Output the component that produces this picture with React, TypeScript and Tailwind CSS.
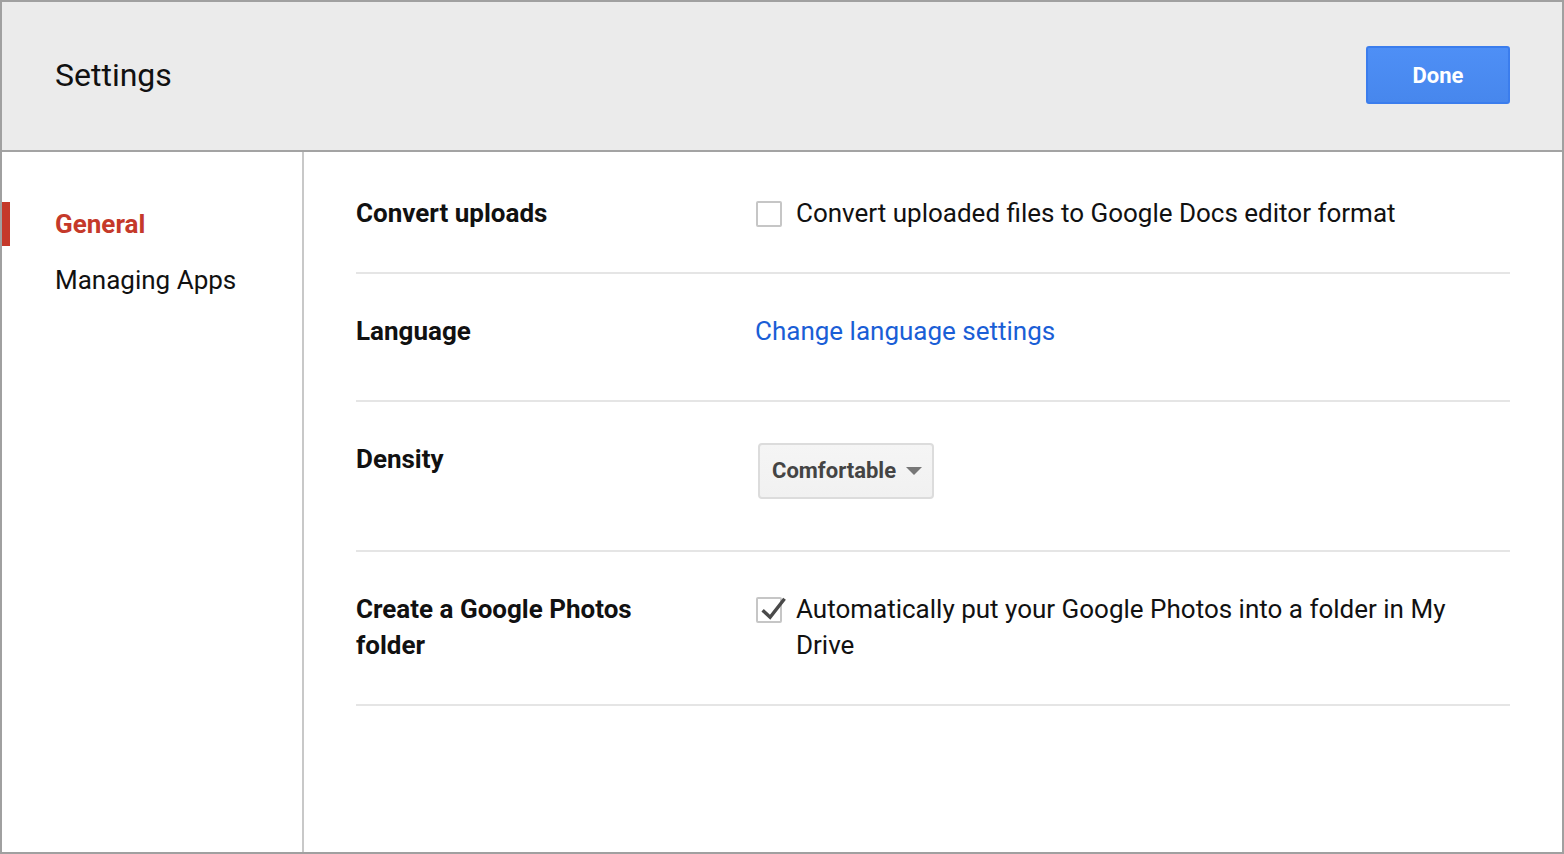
import { useState } from "react";

const navItems = ["General", "Managing Apps"];

function Checkbox({ checked, onChange }: { checked: boolean; onChange: () => void }) {
  return (
    <button
      onClick={onChange}
      className="relative mt-[6px] h-[26px] w-[26px] shrink-0 rounded-[2px] border-2 border-[#c6c6c6] bg-white"
    >
      {checked && (
        <svg
          viewBox="0 0 26 26"
          className="absolute left-[0px] top-[-6px] h-[30px] w-[30px]"
          fill="none"
          stroke="#4a4a4a"
          strokeWidth="3"
        >
          <path d="M4 15 L10.5 21 L23 5" />
        </svg>
      )}
    </button>
  );
}

export default function App() {
  const [active, setActive] = useState("General");
  const [convert, setConvert] = useState(false);
  const [photos, setPhotos] = useState(true);

  return (
    <div className="flex h-[854px] w-[1564px] flex-col border-2 border-[#a0a0a0] bg-white font-['Roboto',sans-serif] text-[#111]">
      {/* Header */}
      <div className="flex h-[150px] shrink-0 items-center justify-between border-b-2 border-[#a3a3a3] bg-[#ebebeb] pb-[2px] pl-[53px] pr-[52px]">
        <h1 className="text-[32px] font-normal text-[#111]">Settings</h1>
        <button className="h-[58px] w-[144px] rounded-[3px] border-2 border-[#3b7ded] bg-gradient-to-b from-[#4e8ff6] to-[#4787ed] text-[22px] font-bold text-white">
          Done
        </button>
      </div>

      <div className="flex min-h-0 flex-1">
        {/* Sidebar */}
        <nav className="w-[302px] shrink-0 border-r-2 border-[#c8c8c8] pt-[50px]">
          {navItems.map((item) => (
            <div
              key={item}
              onClick={() => setActive(item)}
              className={`mb-[12px] flex h-[44px] cursor-pointer items-center border-l-[8px] pl-[45px] text-[26px] ${
                active === item
                  ? "border-[#c5392a] font-bold text-[#c5392a]"
                  : "border-transparent text-[#111]"
              }`}
            >
              {item}
            </div>
          ))}
        </nav>

        {/* Content */}
        <div className="flex-1 px-[52px] pt-[4px]">
          <div className="grid grid-cols-[400px_1fr] border-b-2 border-[#e5e5e5] pb-[41px] pt-[39px] text-[26px] leading-[36px]">
            <div className="font-bold">Convert uploads</div>
            <div className="flex gap-[14px]">
              <Checkbox checked={convert} onChange={() => setConvert(!convert)} />
              <span>Convert uploaded files to Google Docs editor format</span>
            </div>
          </div>

          <div className="grid grid-cols-[400px_1fr] border-b-2 border-[#e5e5e5] pb-[51px] pt-[39px] text-[26px] leading-[36px]">
            <div className="font-bold">Language</div>
            <div>
              <a href="#" className="-ml-[1px] text-[#1a5ed6]">
                Change language settings
              </a>
            </div>
          </div>

          <div className="grid grid-cols-[400px_1fr] items-start border-b-2 border-[#e5e5e5] pb-[51px] pt-[39px] text-[26px] leading-[36px]">
            <div className="font-bold">Density</div>
            <div>
              <button className="ml-[2px] mt-[2px] flex h-[56px] w-[176px] items-center gap-[10px] rounded-[4px] border-2 border-[#dcdcdc] bg-gradient-to-b from-[#f5f5f5] to-[#f1f1f1] pl-[12px] text-[22px] font-bold text-[#444]">
                Comfortable
                <svg viewBox="0 0 16 8" className="h-[8px] w-[16px]">
                  <path d="M0 0 L16 0 L8 8 Z" fill="#777" />
                </svg>
              </button>
            </div>
          </div>

          <div className="grid grid-cols-[400px_1fr] border-b-2 border-[#e5e5e5] pb-[41px] pt-[39px] text-[26px] leading-[36px]">
            <div className="pr-[100px] font-bold">Create a Google Photos folder</div>
            <div className="flex gap-[14px] pr-[40px]">
              <Checkbox checked={photos} onChange={() => setPhotos(!photos)} />
              <span>Automatically put your Google Photos into a folder in My Drive</span>
            </div>
          </div>
        </div>
      </div>
    </div>
  );
}
